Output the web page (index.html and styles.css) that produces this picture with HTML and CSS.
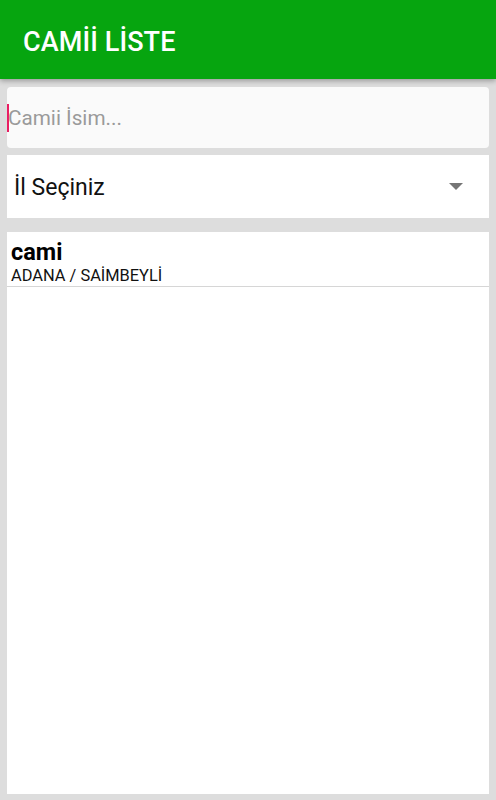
FILE: index.html
```html
<!DOCTYPE html>
<html lang="tr">
<head>
<meta charset="utf-8">
<link rel="stylesheet" href="styles.css">
</head>
<body>
<div class="app">
  <header class="toolbar"><h1 class="title">CAMİİ LİSTE</h1></header>
  <main class="content">
    <div class="search">
      <span class="cursor"></span>
      <span class="placeholder">Camii İsim...</span>
    </div>
    <div class="select">
      <span class="select-text">İl Seçiniz</span>
      <svg class="arrow" width="14" height="7" viewBox="0 0 14 7"><path d="M0 0H14L7 7Z" fill="#757575"/></svg>
    </div>
    <div class="list">
      <div class="item">
        <div class="item-name">cami</div>
        <div class="item-place">ADANA / SAİMBEYLİ</div>
      </div>
    </div>
  </main>
</div>
</body>
</html>
```

FILE: styles.css
```css
html, body {
  margin: 0;
  padding: 0;
}
body {
  background: #dddddd;
  font-family: Roboto, "Noto Sans", sans-serif;
}
.app {
  height: 800px;
  display: flex;
  flex-direction: column;
}
.toolbar {
  height: 79px;
  background: #06a50f;
  display: flex;
  align-items: center;
  padding-left: 23px;
  box-shadow: 0 2px 5px rgba(0,0,0,0.3);
  position: relative;
  z-index: 1;
  flex-shrink: 0;
}
.title {
  margin: 0;
  color: #fff;
  font-size: 27px;
  font-weight: 500;
  letter-spacing: 0.1px;
  padding-top: 4px;
}
.content {
  flex: 1;
  display: flex;
  flex-direction: column;
  padding: 8px 7px 6px 7px;
  min-height: 0;
}
.search {
  height: 61px;
  background: #fafafa;
  border-radius: 4px;
  display: flex;
  align-items: center;
}
.cursor {
  width: 2px;
  height: 28px;
  background: #e91e63;
}
.placeholder {
  color: #9a9a9a;
  font-size: 20.7px;
  margin-left: -1px;
}
.select {
  margin-top: 7px;
  height: 63px;
  background: #fff;
  display: flex;
  align-items: center;
  justify-content: space-between;
  padding: 0 26px 0 7px;
}
.select-text {
  font-size: 23px;
  color: #111;
  padding-top: 2px;
}
.arrow {
  display: block;
  margin-top: -1px;
}
.list {
  margin-top: 14px;
  flex: 1;
  background: #fff;
}
.item {
  padding: 7px 4px 0 4px;
  border-bottom: 1px solid #d6d6d6;
}
.item-name {
  font-size: 23.5px;
  font-weight: 700;
  color: #000;
  line-height: 26px;
}
.item-place {
  font-size: 16.4px;
  color: #111;
  line-height: 21px;
}
```
